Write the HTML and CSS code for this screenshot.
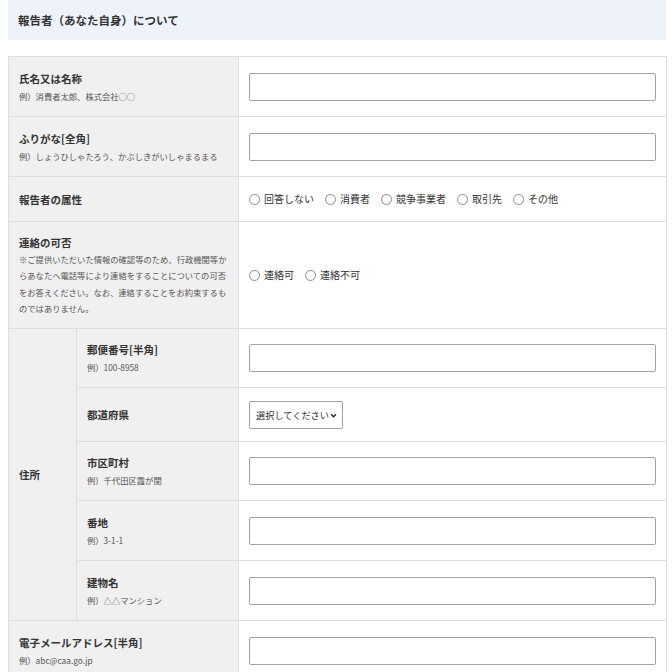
FILE: index.html
```html
<!DOCTYPE html>
<html lang="ja">
<head>
<meta charset="utf-8">
<title>報告者（あなた自身）について</title>
<link rel="stylesheet" href="styles.css">
</head>
<body>
<div class="page">
  <h2 class="section-title">報告者（あなた自身）について</h2>
  <table class="form-table">
    <colgroup>
      <col class="c-group">
      <col class="c-sub">
      <col class="c-field">
    </colgroup>
    <tbody>
      <tr>
        <th colspan="2"><span class="lbl">氏名又は名称</span><span class="ex">例）消費者太郎、株式会社○○</span></th>
        <td class="field"><input type="text" class="txt"></td>
      </tr>
      <tr>
        <th colspan="2"><span class="lbl">ふりがな[全角]</span><span class="ex">例）しょうひしゃたろう、かぶしきがいしゃまるまる</span></th>
        <td class="field"><input type="text" class="txt"></td>
      </tr>
      <tr>
        <th colspan="2"><span class="lbl">報告者の属性</span></th>
        <td class="field radio-cell">
          <div class="radios">
            <label class="rd"><input type="radio" name="attr"><span>回答しない</span></label>
            <label class="rd"><input type="radio" name="attr"><span>消費者</span></label>
            <label class="rd"><input type="radio" name="attr"><span>競争事業者</span></label>
            <label class="rd"><input type="radio" name="attr"><span>取引先</span></label>
            <label class="rd"><input type="radio" name="attr"><span>その他</span></label>
          </div>
        </td>
      </tr>
      <tr>
        <th colspan="2"><span class="lbl">連絡の可否</span><span class="note">※ご提供いただいた情報の確認等のため、行政機関等からあなたへ電話等により連絡をすることについての可否をお答えください。なお、連絡することをお約束するものではありません。</span></th>
        <td class="field radio-cell">
          <div class="radios">
            <label class="rd"><input type="radio" name="contact"><span>連絡可</span></label>
            <label class="rd"><input type="radio" name="contact"><span>連絡不可</span></label>
          </div>
        </td>
      </tr>
      <tr>
        <th rowspan="5" class="group"><span class="lbl">住所</span></th>
        <th class="sub"><span class="lbl">郵便番号[半角]</span><span class="ex">例）100-8958</span></th>
        <td class="field tight"><input type="text" class="txt"></td>
      </tr>
      <tr>
        <th class="sub"><span class="lbl">都道府県</span></th>
        <td class="field sel-cell">
          <select class="sel"><option>選択してください</option></select>
        </td>
      </tr>
      <tr>
        <th class="sub"><span class="lbl">市区町村</span><span class="ex">例）千代田区霞が関</span></th>
        <td class="field tight"><input type="text" class="txt"></td>
      </tr>
      <tr>
        <th class="sub"><span class="lbl">番地</span><span class="ex">例）3-1-1</span></th>
        <td class="field"><input type="text" class="txt"></td>
      </tr>
      <tr>
        <th class="sub"><span class="lbl">建物名</span><span class="ex">例）△△マンション</span></th>
        <td class="field"><input type="text" class="txt"></td>
      </tr>
      <tr>
        <th colspan="2"><span class="lbl">電子メールアドレス[半角]</span><span class="ex">例）abc@caa.go.jp</span></th>
        <td class="field"><input type="text" class="txt"></td>
      </tr>
    </tbody>
  </table>
</div>
</body>
</html>
```

FILE: styles.css
```css
* { box-sizing: border-box; }

body {
  margin: 0;
  background: #ffffff;
  font-family: "Noto Sans CJK JP", "Noto Sans", sans-serif;
  color: #333333;
}

.page {
  width: 658px;
  margin-left: 8px;
}

.section-title {
  margin: 0 0 16px;
  height: 40px;
  display: flex;
  align-items: center;
  padding-left: 10px;
  background: #eef3fb;
  font-size: 11.5px;
  font-weight: bold;
  color: #333333;
}

.form-table {
  width: 658px;
  table-layout: fixed;
  border-collapse: collapse;
  border: 1px solid #dddddd;
  font-size: 10px;
  line-height: 1;
}

.c-group { width: 68px; }
.c-sub { width: 162px; }
.c-field { width: 428px; }

.form-table th {
  background: #f0f0f0;
  border: 1px solid #dddddd;
  text-align: left;
  vertical-align: middle;
  padding: 12px 10px;
  font-weight: normal;
}

.form-table td {
  border: 1px solid #dddddd;
  background: #ffffff;
  vertical-align: middle;
}

.lbl {
  display: block;
  font-size: 10.5px;
  font-weight: bold;
  line-height: 17px;
  color: #333333;
}

.ex {
  display: block;
  margin-top: 1px;
  font-size: 8.3px;
  line-height: 16px;
  color: #555555;
}

.note {
  display: block;
  font-size: 8.3px;
  line-height: 16.3px;
  color: #555555;
}

.form-table td.field {
  padding: 16px 10px 15px;
}

.form-table td.tight {
  padding: 15px 10px 15px;
}

.txt {
  display: block;
  width: 100%;
  height: 28px;
  border: 1px solid #a3a3a3;
  border-radius: 2px;
  background: #ffffff;
  margin: 0;
}

.form-table td.sel-cell {
  padding: 13px 10px 12px;
}

.sel {
  display: block;
  width: 94px;
  height: 28px;
  font-family: "Noto Sans CJK JP", sans-serif;
  font-size: 9.2px;
  color: #333333;
  border: 1px solid #a3a3a3;
  border-radius: 2px;
  padding: 0 12px 0 6px;
  appearance: none;
  -webkit-appearance: none;
  background-color: #ffffff;
  background-image: url("data:image/svg+xml,%3Csvg xmlns='http://www.w3.org/2000/svg' width='8' height='6' viewBox='0 0 8 6'%3E%3Cpath d='M1 1.5l3 3 3-3' fill='none' stroke='%23222' stroke-width='1.6'/%3E%3C/svg%3E");
  background-repeat: no-repeat;
  background-position: right 5px center;
  background-size: 7px 5px;
}

.form-table td.radio-cell {
  padding: 14px 10px;
}

.radios {
  display: flex;
  align-items: center;
  gap: 11px;
  height: 16px;
}

.rd {
  display: flex;
  align-items: center;
  font-size: 10px;
  line-height: 16px;
  color: #333333;
}

.rd input {
  appearance: none;
  -webkit-appearance: none;
  width: 11px;
  height: 11px;
  margin: 0 4px 0 0;
  border: 1px solid #8c8c8c;
  border-radius: 50%;
  background: #ffffff;
}
```
